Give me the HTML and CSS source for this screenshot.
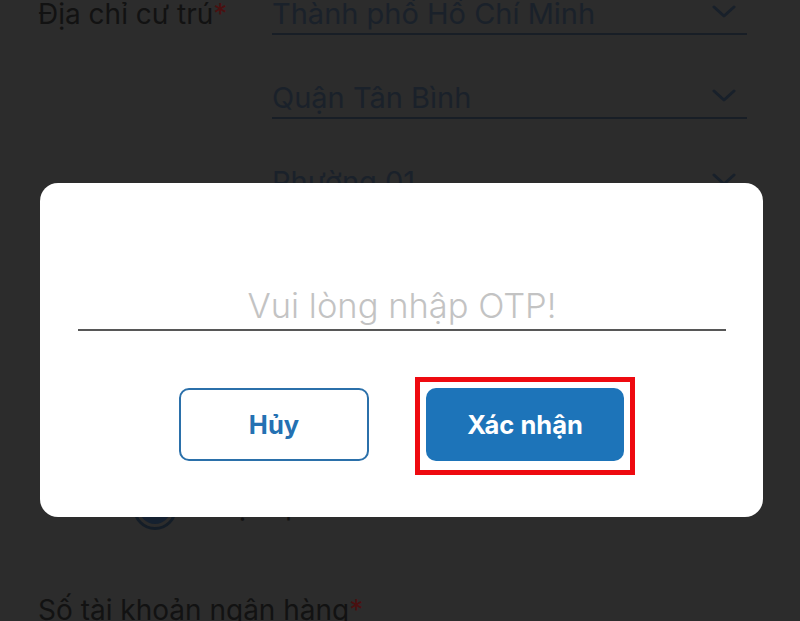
FILE: index.html
```html
<!DOCTYPE html>
<html lang="vi">
<head>
<meta charset="utf-8">
<title>Xác nhận OTP</title>
<link rel="stylesheet" href="styles.css">
</head>
<body>
<main class="form">
  <section class="row address">
    <div class="label">Địa chỉ cư trú<span class="req">*</span></div>
    <div class="fields">
      <div class="select"><span class="value">Thành phố Hồ Chí Minh</span>
        <svg class="chev" viewBox="0 0 24 14" width="24" height="14"><path d="M2 2 L12 11 L22 2" fill="none" stroke="currentColor" stroke-width="3" stroke-linecap="round" stroke-linejoin="round"/></svg>
      </div>
      <div class="select"><span class="value">Quận Tân Bình</span>
        <svg class="chev" viewBox="0 0 24 14" width="24" height="14"><path d="M2 2 L12 11 L22 2" fill="none" stroke="currentColor" stroke-width="3" stroke-linecap="round" stroke-linejoin="round"/></svg>
      </div>
      <div class="select"><span class="value">Phường 01</span>
        <svg class="chev" viewBox="0 0 24 14" width="24" height="14"><path d="M2 2 L12 11 L22 2" fill="none" stroke="currentColor" stroke-width="3" stroke-linecap="round" stroke-linejoin="round"/></svg>
      </div>
    </div>
  </section>

  <section class="radio-row">
    <span class="radio"><span class="dot"></span></span>
    <span class="radio-text">Nhận qua email</span>
  </section>

  <section class="row bank">
    <div class="label">Số tài khoản ngân hàng<span class="req">*</span></div>
  </section>
</main>

<div class="dialog" role="dialog">
  <div class="otp-input">Vui lòng nhập OTP!</div>
  <div class="actions">
    <button class="btn btn-outline">Hủy</button>
    <button class="btn btn-primary highlighted">Xác nhận</button>
  </div>
</div>
</body>
</html>
```

FILE: styles.css
```css
* { box-sizing: border-box; }

html, body {
  margin: 0;
  padding: 0;
  height: 100%;
}

body {
  background: #2c2c2c;
  font-family: Inter, "Noto Sans", sans-serif;
  overflow: hidden;
}

.form {
  margin-top: -3px;
  padding: 0 53px 0 38px;
}

.row {
  display: grid;
  grid-template-columns: 234px 1fr;
}

.label {
  font-size: 28px;
  line-height: 34px;
  color: #121212;
  white-space: nowrap;
}

.req { color: #4a1010; }

.fields {
  display: flex;
  flex-direction: column;
  gap: 46px;
}

.select {
  height: 38px;
  display: flex;
  justify-content: space-between;
  align-items: flex-start;
  border-bottom: 2px solid #181e26;
  color: #1a212a;
}

.value {
  font-size: 29px;
  line-height: 34px;
  white-space: nowrap;
}

.chev {
  margin-top: 8px;
  margin-right: 11px;
  color: #18202a;
}

.radio-row {
  margin-top: 283px;
  margin-left: 95px;
  height: 44px;
  display: flex;
  align-items: flex-start;
  gap: 20px;
}

.radio {
  width: 44px;
  height: 44px;
  border-radius: 50%;
  border: 3px solid #141d27;
  display: flex;
  align-items: center;
  justify-content: center;
}

.dot {
  width: 32px;
  height: 32px;
  border-radius: 50%;
  background: #152130;
}

.radio-text {
  font-size: 28px;
  line-height: 38px;
  color: #121212;
}

.bank { margin-top: 63px; }

/* Dialog overlay */
.dialog {
  position: fixed;
  left: 40px;
  top: 183px;
  width: 723px;
  height: 334px;
  background: #ffffff;
  border-radius: 18px;
  padding: 99px 37px 0 38px;
}

.otp-input {
  height: 49px;
  border-bottom: 2px solid #575757;
  text-align: center;
  font-size: 34.5px;
  font-weight: 300;
  line-height: 47px;
  color: #c3c3c3;
}

.actions {
  margin-top: 57px;
  display: flex;
  justify-content: center;
  gap: 57px;
  margin-left: -38px;
  margin-right: -37px;
}

.btn {
  height: 73px;
  border-radius: 10px;
  font-family: Inter, "Noto Sans", sans-serif;
  font-weight: 700;
  font-size: 25.5px;
  cursor: pointer;
  padding: 0;
}

.btn-outline {
  width: 190px;
  background: #fff;
  border: 2px solid #2b70aa;
  color: #2471b2;
}

.btn-primary {
  width: 198px;
  background: #1d74b9;
  border: none;
  color: #fff;
}

.highlighted { position: relative; }

.highlighted::after {
  content: "";
  position: absolute;
  left: -11px;
  right: -11px;
  top: -11px;
  bottom: -14px;
  border: 5px solid #ee0a10;
  pointer-events: none;
}
```
